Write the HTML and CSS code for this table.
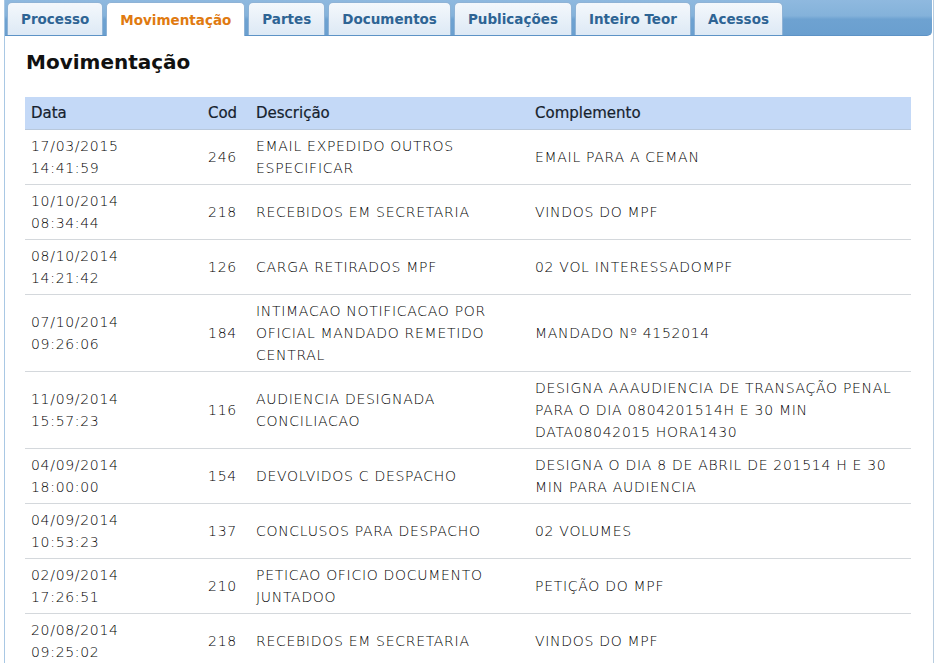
FILE: index.html
```html
<!DOCTYPE html>
<html lang="pt">
<head>
<meta charset="utf-8">
<title>Movimentação</title>
<link rel="stylesheet" href="styles.css">
</head>
<body>
<div class="panel">
  <ul class="tabs">
    <li class="tab">Processo</li>
    <li class="tab active">Movimentação</li>
    <li class="tab">Partes</li>
    <li class="tab">Documentos</li>
    <li class="tab">Publicações</li>
    <li class="tab">Inteiro Teor</li>
    <li class="tab">Acessos</li>
  </ul>
  <div class="content">
    <h2 class="title">Movimentação</h2>
    <table class="mov">
      <thead>
        <tr><th class="c-data">Data</th><th class="c-cod">Cod</th><th class="c-desc">Descrição</th><th class="c-comp">Complemento</th></tr>
      </thead>
      <tbody>
        <tr><td>17/03/2015<br>14:41:59</td><td class="cod">246</td><td>EMAIL EXPEDIDO OUTROS ESPECIFICAR</td><td>EMAIL PARA A CEMAN</td></tr>
        <tr><td>10/10/2014<br>08:34:44</td><td class="cod">218</td><td>RECEBIDOS EM SECRETARIA</td><td>VINDOS DO MPF</td></tr>
        <tr><td>08/10/2014<br>14:21:42</td><td class="cod">126</td><td>CARGA RETIRADOS MPF</td><td>02 VOL INTERESSADOMPF</td></tr>
        <tr><td>07/10/2014<br>09:26:06</td><td class="cod">184</td><td>INTIMACAO NOTIFICACAO POR OFICIAL MANDADO REMETIDO CENTRAL</td><td>MANDADO Nº 4152014</td></tr>
        <tr><td>11/09/2014<br>15:57:23</td><td class="cod">116</td><td>AUDIENCIA DESIGNADA CONCILIACAO</td><td>DESIGNA AAAUDIENCIA DE TRANSAÇÃO PENAL PARA O DIA 0804201514H E 30 MIN DATA08042015 HORA1430</td></tr>
        <tr><td>04/09/2014<br>18:00:00</td><td class="cod">154</td><td>DEVOLVIDOS C DESPACHO</td><td>DESIGNA O DIA 8 DE ABRIL DE 201514 H E 30 MIN PARA AUDIENCIA</td></tr>
        <tr><td>04/09/2014<br>10:53:23</td><td class="cod">137</td><td>CONCLUSOS PARA DESPACHO</td><td>02 VOLUMES</td></tr>
        <tr><td>02/09/2014<br>17:26:51</td><td class="cod">210</td><td>PETICAO OFICIO DOCUMENTO JUNTADOO</td><td>PETIÇÃO DO MPF</td></tr>
        <tr><td>20/08/2014<br>09:25:02</td><td class="cod">218</td><td>RECEBIDOS EM SECRETARIA</td><td>VINDOS DO MPF</td></tr>
      </tbody>
    </table>
  </div>
</div>
</body>
</html>
```

FILE: styles.css
```css
html, body {
  margin: 0;
  padding: 0;
  background: #ffffff;
}
body {
  font-family: "DejaVu Sans", Verdana, sans-serif;
  color: #222;
}
.panel {
  margin-left: 4px;
  width: 930px;
  min-height: 663px;
  border-left: 1px solid #a9c8e4;
  border-right: 1px solid #b8cde0;
  box-sizing: border-box;
}
.tabs {
  list-style: none;
  margin: 0 1px 0 0;
  padding: 2px 0 0 2px;
  height: 36px;
  box-sizing: border-box;
  display: flex;
  gap: 3px;
  background: linear-gradient(#8fb9df 0%, #84b2da 45%, #6ea2d1 55%, #6a9fcf 100%);
  border-bottom: 1px solid #5d93c6;
  border-bottom-right-radius: 5px;
}
.tab {
  height: 33px;
  box-sizing: border-box;
  padding: 0 13px;
  display: flex;
  align-items: center;
  font-size: 13.5px;
  font-weight: bold;
  color: #2e6494;
  background: linear-gradient(#f4f8fc, #dde9f5);
  border: 1px solid #8fb3d6;
  border-bottom: none;
  border-radius: 5px 5px 0 0;
}
.tab.active {
  background: #ffffff;
  color: #e07a10;
  height: 34px;
  margin-bottom: -1px;
}
.content {
  padding: 12px 21px 0 20px;
}
.title {
  margin: 0 0 21px 1px;
  font-size: 20px;
  font-weight: bold;
  color: #111;
  line-height: 28px;
}
.mov {
  width: 886px;
  border-collapse: collapse;
  font-size: 14px;
}
.mov th {
  background: #c4d9f7;
  text-align: left;
  font-weight: normal;
  font-size: 15px;
  color: #16222e;
  height: 32px;
  padding: 0 6px;
  border-bottom: 1px solid #b8c8dc;
  -webkit-text-stroke: 0.2px #16222e;
}
.mov th.c-data { width: 158px; }
.mov th.c-cod { width: 43px; text-align: center; }
.mov th.c-desc { width: 267px; }
.mov td {
  font-weight: 200;
  line-height: 22px;
  padding: 5px 6px;
  border-bottom: 1px solid #d4d8dc;
  vertical-align: middle;
  color: #000;
  letter-spacing: 0.7px;
}
.mov td.cod { text-align: center; }
```
